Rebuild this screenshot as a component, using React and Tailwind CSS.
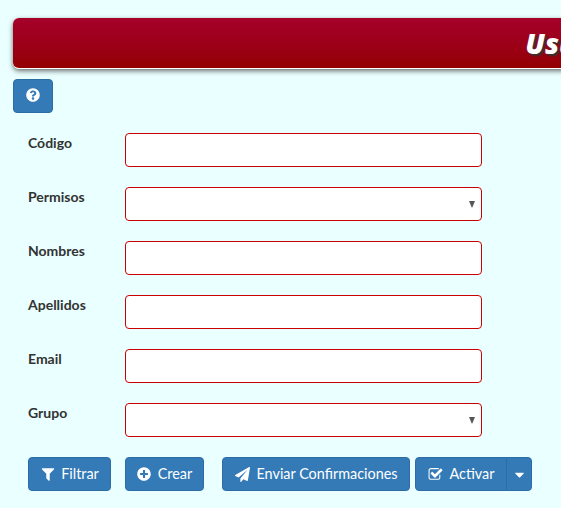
import React from "react";
import { FaPlusCircle, FaQuestionCircle, FaCaretDown } from "react-icons/fa";

function Icon({ d, size = 14 }) {
  return (
    <svg width={size} height={size} viewBox="0 0 1792 1792" fill="currentColor" className="shrink-0">
      <path d={d} />
    </svg>
  );
}

const filterPath = "M1595 295q17 41-14 70l-493 493v742q0 42-39 59-13 5-25 5-27 0-45-19l-256-256q-19-19-19-45v-486l-493-493q-31-29-14-70 17-39 59-39h1280q42 0 59 39z";
const planePath = "M1764 11q33 24 27 64l-256 1536q-5 29-32 45-14 8-31 8-11 0-24-5l-453-185-242 295q-18 23-49 23-13 0-22-4-19-7-30.5-23.5t-11.5-36.5v-349l864-1059-1069 925-395-162q-37-14-40-55-2-40 32-59l1664-960q15-9 32-9 20 0 36 11z";
const checkPath = "M1472 930v318q0 119-84.5 203.5t-203.5 84.5h-832q-119 0-203.5-84.5t-84.5-203.5v-832q0-119 84.5-203.5t203.5-84.5h832q63 0 117 25 15 7 18 23 3 17-9 29l-49 49q-10 10-23 10-3 0-9-2-23-6-45-6h-832q-66 0-113 47t-47 113v832q0 66 47 113t113 47h832q66 0 113-47t47-113v-254q0-13 9-22l64-64q10-10 23-10 6 0 12 3 20 8 20 29zm231-489l-814 814q-24 24-57 24t-57-24l-430-430q-24-24-24-57t24-57l110-110q24-24 57-24t57 24l263 263 647-647q24-24 57-24t57 24l110 110q24 24 24 57t-24 57z";

function Field({ label, select }) {
  return (
    <div className="flex items-start">
      <label className="w-[97px] shrink-0 text-[14px] leading-[20px] font-bold text-[#333333]">{label}</label>
      <div className="relative w-[357px] h-[34px] bg-white border border-[#cc0000] rounded-[4px]">
        {select && (
          <svg className="absolute right-[6px] top-[13px]" width="6" height="7" viewBox="0 0 6 7">
            <path d="M0 0H6L3 7Z" fill="#555555" />
          </svg>
        )}
      </div>
    </div>
  );
}

function Btn({ icon, children, className = "" }) {
  return (
    <button className={"flex items-center justify-center h-[34px] bg-[#337ab7] border border-[#2e6da4] text-white text-[14.4px] rounded-[4px] " + className}>
      {icon}
      {children}
    </button>
  );
}

export default function App() {
  return (
    <div className="w-[561px] h-[508px] overflow-hidden bg-[#eaffff] font-['Lato','Noto_Sans',sans-serif] pt-[18px]">
      <div className="ml-[13px] w-[1146px] h-[51px] flex items-center justify-center rounded-[6px] border-b border-r border-white bg-gradient-to-b from-[#a60029] to-[#930000] shadow-[0_2px_5px_rgba(60,60,60,0.75)]">
        <h1 className="text-white italic font-extrabold text-[28px] leading-none [text-shadow:2px_2px_2px_#333] font-['Open_Sans',sans-serif]">Usuarios</h1>
      </div>
      <div className="ml-[13px] mt-[10px]">
        <button className="flex items-center justify-center w-[40px] h-[34px] bg-[#337ab7] border border-[#2e6da4] rounded-[4px] text-white">
          <FaQuestionCircle size={14} className="-mt-[2px]" />
        </button>
      </div>
      <div className="ml-[28px] mt-[20px] flex flex-col gap-[20px]">
        <Field label="Código" />
        <Field label="Permisos" select />
        <Field label="Nombres" />
        <Field label="Apellidos" />
        <Field label="Email" />
        <Field label="Grupo" select />
      </div>
      <div className="ml-[28px] mt-[20px] flex">
        <Btn className="w-[83px] gap-[5px]" icon={<Icon d={filterPath} size={16} />}>Filtrar</Btn>
        <Btn className="w-[79px] ml-[14px] gap-[7px]" icon={<FaPlusCircle size={14} />}>Crear</Btn>
        <Btn className="w-[188px] ml-[18px] gap-[7px]" icon={<Icon d={planePath} size={15} />}>Enviar Confirmaciones</Btn>
        <div className="flex ml-[5px]">
          <Btn className="w-[92px] rounded-r-none gap-[7px]" icon={<Icon d={checkPath} size={15} />}>Activar</Btn>
          <Btn className="w-[26px] -ml-px rounded-l-none" icon={<FaCaretDown size={15} />} />
        </div>
      </div>
    </div>
  );
}
